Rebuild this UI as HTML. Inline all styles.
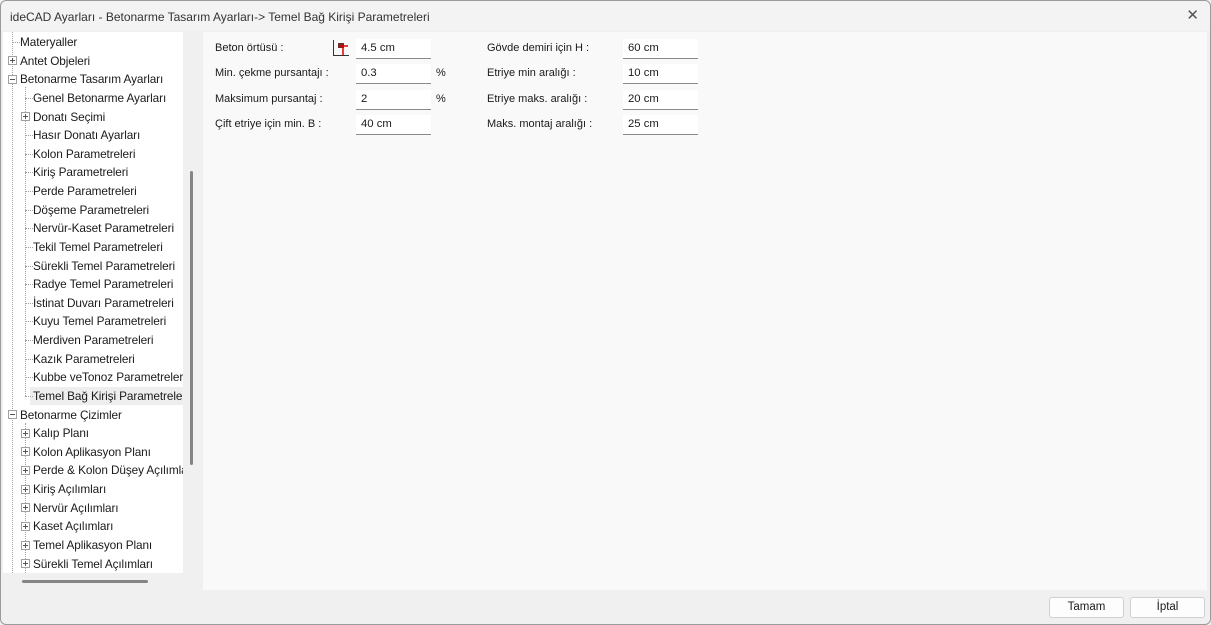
<!DOCTYPE html>
<html><head><meta charset="utf-8"><style>
*{margin:0;padding:0;box-sizing:border-box}
body{width:1211px;height:625px;background:#f0f0f0;font-family:"Liberation Sans",sans-serif;font-size:12px;color:#1a1a1a;position:relative;overflow:hidden}
.win{position:absolute;left:0;top:0;width:1211px;height:625px;background:#f0f0f0;overflow:hidden}
.frame{position:absolute;left:0;top:0;width:1211px;height:625px;border:1px solid #9a9a9a;border-radius:6px;pointer-events:none}
.title{position:absolute;left:0;top:0;width:100%;height:31px;background:#f3f3f3;font-size:12px;color:#333;padding:10px 0 0 10px}
.x{position:absolute;right:12px;top:6px;font-size:15px;color:#555;font-weight:300}
.tree{position:absolute;left:3px;top:32px;width:180px;height:541px;background:#fff;overflow:hidden}
.vsb{position:absolute;left:183px;top:32px;width:20px;height:541px;background:#f0f0f0}
.thumb{position:absolute;left:190px;top:171px;width:3px;height:294px;background:#858585;border-radius:2px}
.hthumb{position:absolute;left:22px;top:580px;width:126px;height:3px;background:#858585;border-radius:2px}
.right{position:absolute;left:203px;top:32px;width:1004px;height:558px;background:#f9f9f9}
.r{position:absolute;white-space:nowrap;height:18px;line-height:18px;font-size:11.8px;letter-spacing:-0.1px}
.box{position:absolute;width:9px;height:9px;border:1px solid #a0a0a0;background:#fff}
.box:before{content:"";position:absolute;left:1px;top:3px;width:5px;height:1px;background:#555}
.box.p:after{content:"";position:absolute;left:3px;top:1px;width:1px;height:5px;background:#555}
.vl{position:absolute;border-left:1px dotted #a0a0a0;width:0}
.hl{position:absolute;border-top:1px dotted #a0a0a0;height:0}
.lbl{position:absolute;font-size:11px;white-space:nowrap}
.inp{position:absolute;width:75px;height:20px;background:#fff;border-bottom:1px solid #8a8a8a;font-size:11.3px;padding:3px 0 0 5px}
.btn{position:absolute;top:597px;width:75px;height:21px;background:#fdfdfd;border:1px solid #d0d0d0;border-radius:3px;text-align:center;line-height:19px;font-size:11.5px}
</style></head><body><div class="win">
<div class="title">ideCAD Ayarları - Betonarme Tasarım Ayarları-&gt; Temel Bağ Kirişi Parametreleri<span class="x">✕</span></div>
<div class="tree">
<div class="vl" style="left:9px;top:0;height:541px"></div>
<div class="vl" style="left:22px;top:55px;height:309px"></div>
<div class="vl" style="left:22px;top:391px;height:150px"></div>
<div style="position:absolute;left:27px;top:355px;width:153px;height:18px;background:#eeeeee"></div>
</div>
<div class="vsb"></div><div class="thumb"></div><div class="hthumb"></div>
<div class="right"></div>
<div class="lbl" style="left:215px;top:42px">Beton örtüsü :</div>
<div class="lbl" style="left:215px;top:67px">Min. çekme pursantajı :</div>
<div class="lbl" style="left:215px;top:93px">Maksimum pursantaj :</div>
<div class="lbl" style="left:215px;top:118px">Çift etriye için min. B :</div>
<svg style="position:absolute;left:332px;top:40px" width="18" height="17"><path d="M1.5 0V15.5H17" stroke="#333" fill="none"/><rect x="6" y="3" width="6" height="5" fill="#6a3030"/><path d="M8 6H16M11 7V15" stroke="#d00" stroke-width="1.5"/></svg>
<div class="inp" style="left:356px;top:39px">4.5 cm</div>
<div class="inp" style="left:356px;top:64px">0.3</div>
<div class="inp" style="left:356px;top:90px">2</div>
<div class="inp" style="left:356px;top:115px">40 cm</div>
<div class="lbl" style="left:436px;top:67px">%</div>
<div class="lbl" style="left:436px;top:93px">%</div>
<div class="lbl" style="left:487px;top:42px">Gövde demiri için H :</div>
<div class="lbl" style="left:487px;top:67px">Etriye min aralığı :</div>
<div class="lbl" style="left:487px;top:93px">Etriye maks. aralığı :</div>
<div class="lbl" style="left:487px;top:118px">Maks. montaj aralığı :</div>
<div class="inp" style="left:623px;top:39px">60 cm</div>
<div class="inp" style="left:623px;top:64px">10 cm</div>
<div class="inp" style="left:623px;top:90px">20 cm</div>
<div class="inp" style="left:623px;top:115px">25 cm</div>
<div class="btn" style="left:1049px">Tamam</div>
<div class="btn" style="left:1130px">İptal</div>
<div class="frame"></div>
</div>
<script>
var rows=[[0,"Materyaller",""],[0,"Antet Objeleri","p"],[0,"Betonarme Tasarım Ayarları","m"],[1,"Genel Betonarme Ayarları",""],[1,"Donatı Seçimi","p"],[1,"Hasır Donatı Ayarları",""],[1,"Kolon Parametreleri",""],[1,"Kiriş Parametreleri",""],[1,"Perde Parametreleri",""],[1,"Döşeme Parametreleri",""],[1,"Nervür-Kaset Parametreleri",""],[1,"Tekil Temel Parametreleri",""],[1,"Sürekli Temel Parametreleri",""],[1,"Radye Temel Parametreleri",""],[1,"İstinat Duvarı Parametreleri",""],[1,"Kuyu Temel Parametreleri",""],[1,"Merdiven Parametreleri",""],[1,"Kazık Parametreleri",""],[1,"Kubbe veTonoz Parametreleri",""],[1,"Temel Bağ Kirişi Parametreleri",""],[0,"Betonarme Çizimler","m"],[1,"Kalıp Planı","p"],[1,"Kolon Aplikasyon Planı","p"],[1,"Perde & Kolon Düşey Açılımları","p"],[1,"Kiriş Açılımları","p"],[1,"Nervür Açılımları","p"],[1,"Kaset Açılımları","p"],[1,"Temel Aplikasyon Planı","p"],[1,"Sürekli Temel Açılımları","p"]];
var h="";rows.forEach(function(r,i){var y=42+18.63*i-32;var tx=r[0]?30:17,bx=r[0]?18:5;
if(r[2])h+='<div class="box'+(r[2]=="p"?" p":"")+'" style="left:'+bx+'px;top:'+(y-4.5)+'px"></div>';else h+='<div class="hl" style="left:'+(bx+4)+'px;top:'+y+'px;width:8px"></div>';
h+='<div class="r" style="left:'+tx+'px;top:'+(y-9)+'px">'+r[1]+'</div>';});
document.querySelector('.tree').insertAdjacentHTML('beforeend',h);
</script>
</body></html>
